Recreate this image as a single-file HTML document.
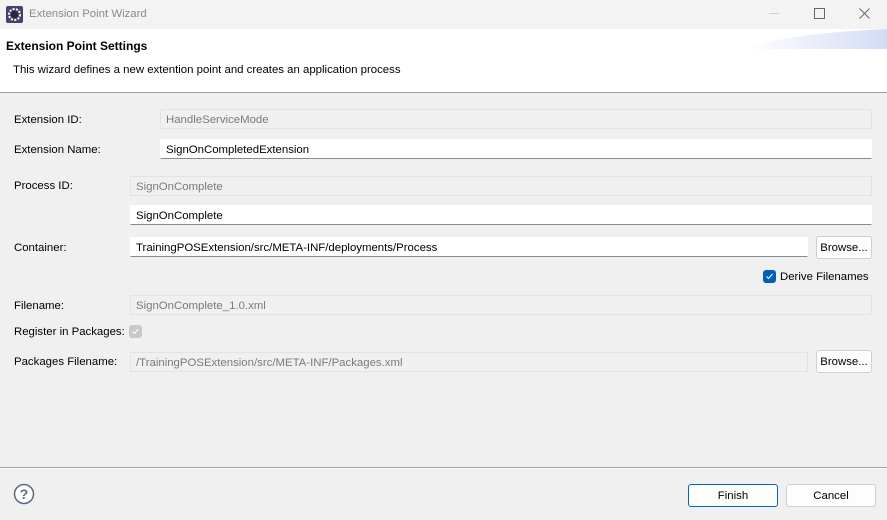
<!DOCTYPE html>
<html><head><style>
body{margin:0;width:887px;height:520px;overflow:hidden;background:#f0f0f0;font-family:"Liberation Sans",sans-serif;font-size:11.4px;color:#000;position:relative}
.a{position:absolute}
.f{position:absolute;height:20px;box-sizing:border-box;line-height:20px;padding-left:5px;white-space:nowrap}
.d{background:#f0f0f0;border:1px solid #e3e3e3;color:#7a7a7a}
.w{background:#fff;border:1px solid #fff;border-bottom:1px solid #8a8a8a}
.l{position:absolute;left:14px;line-height:16px}
.b{position:absolute;background:#fdfdfd;border:1px solid #d0d0d0;border-radius:3px;box-sizing:border-box;text-align:center}
</style></head><body>
<div class="a" style="left:0;top:0;width:887px;height:29px;background:#f3f3f3"></div>
<svg class="a" style="left:6px;top:6px" width="17" height="17" viewBox="0 0 17 17"><rect x="0" y="0" width="17" height="17" rx="2" fill="#4a3f6b"/><circle cx="8.5" cy="8.5" r="5.5" fill="none" stroke="#fff" stroke-width="2" stroke-dasharray="2 1.4"/><circle cx="8.5" cy="8.5" r="3.5" fill="#2a2540"/></svg>
<div class="a" style="left:29px;top:8px;color:#8a8a8a">Extension Point Wizard</div>
<div class="a" style="left:769px;top:13px;width:10px;height:1px;background:#cfcfcf"></div>
<div class="a" style="left:814px;top:8px;width:9px;height:9px;border:1px solid #666"></div>
<svg class="a" style="left:859px;top:8px" width="11" height="11"><path d="M0.5 0.5L10.5 10.5M10.5 0.5L0.5 10.5" stroke="#666" stroke-width="1"/></svg>
<div class="a" style="left:0;top:29px;width:887px;height:64px;background:#fff"></div>
<svg class="a" style="left:740px;top:29px" width="147" height="21"><defs><linearGradient id="g" x1="0" x2="1"><stop offset="0" stop-color="#fff"/><stop offset="1" stop-color="#d3dcf5"/></linearGradient></defs><path d="M6 20Q40 5 147 0V20Z" fill="url(#g)"/></svg>
<div class="a" style="left:6px;top:39px;font-weight:bold;font-size:12px">Extension Point Settings</div>
<div class="a" style="left:13px;top:64px">This wizard defines a new extention point and creates an application process</div>
<div class="a" style="left:0;top:92px;width:887px;height:1px;background:#a0a0a0"></div>
<div class="l" style="top:112px">Extension ID:</div>
<div class="f d" style="left:160px;top:109px;width:712px">HandleServiceMode</div>
<div class="l" style="top:142px">Extension Name:</div>
<div class="f w" style="left:160px;top:139px;width:712px">SignOnCompletedExtension</div>
<div class="l" style="top:178px">Process ID:</div>
<div class="f d" style="left:130px;top:176px;width:742px">SignOnComplete</div>
<div class="f w" style="left:130px;top:205px;width:742px">SignOnComplete</div>
<div class="l" style="top:240px">Container:</div>
<div class="f w" style="left:130px;top:237px;width:678px">TrainingPOSExtension/src/META-INF/deployments/Process</div>
<div class="b" style="left:816px;top:236px;width:56px;height:23px;line-height:22px">Browse...</div>
<div class="a" style="left:763px;top:270px;width:13px;height:13px;background:#005fb8;border-radius:3px"></div>
<svg class="a" style="left:765px;top:272px" width="9" height="9"><path d="M1.5 4.5L3.5 6.5L7.5 2" stroke="#fff" fill="none" stroke-width="1.1"/></svg>
<div class="a" style="left:780px;top:270px;line-height:15px">Derive Filenames</div>
<div class="l" style="top:298px">Filename:</div>
<div class="f d" style="left:130px;top:295px;width:742px">SignOnComplete_1.0.xml</div>
<div class="l" style="top:324px">Register in Packages:</div>
<div class="a" style="left:129px;top:325px;width:13px;height:13px;background:#c9c9c9;border-radius:3px"></div>
<svg class="a" style="left:131px;top:327px" width="9" height="9"><path d="M1.5 4.5L3.5 6.5L7.5 2" stroke="#fff" fill="none" stroke-width="1.1"/></svg>
<div class="l" style="top:354px">Packages Filename:</div>
<div class="f d" style="left:130px;top:352px;width:678px">/TrainingPOSExtension/src/META-INF/Packages.xml</div>
<div class="b" style="left:816px;top:350px;width:56px;height:23px;line-height:22px">Browse...</div>
<div class="a" style="left:0;top:467px;width:887px;height:1px;background:#a0a0a0"></div>
<div class="a" style="left:0;top:468px;width:887px;height:1px;background:#fff"></div>
<svg class="a" style="left:13px;top:483px" width="22" height="22"><circle cx="11" cy="11" r="9.5" fill="#fff" stroke="#5a6a85" stroke-width="1.5"/><text x="11" y="16" text-anchor="middle" font-family="Liberation Sans" font-size="14" font-weight="bold" fill="#5a6a85">?</text></svg>
<div class="b" style="left:688px;top:484px;width:90px;height:23px;line-height:22px;border-color:#0067c0">Finish</div>
<div class="b" style="left:786px;top:484px;width:90px;height:23px;line-height:22px">Cancel</div>
</body></html>
